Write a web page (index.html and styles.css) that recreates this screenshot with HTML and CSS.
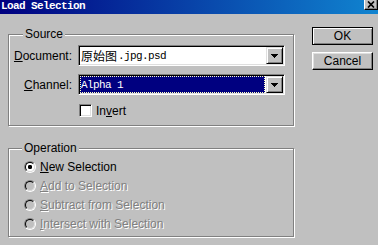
FILE: index.html
```html
<!DOCTYPE html>
<html lang="en">
<head>
    <meta charset="UTF-8">
    <title>Load Selection</title>
    <link rel="stylesheet" href="styles.css">
</head>
<body>
    <div class="titlebar">
        <span class="title">Load Selection</span>
        <span class="close-btn">
            <svg width="8" height="7" viewBox="0 0 8 7"><path d="M1 0.5 L7 6.5 M7 0.5 L1 6.5" stroke="#000" stroke-width="1.7"/></svg>
        </span>
    </div>

    <div class="dialog">
        <div class="groups">
            <fieldset class="group source">
                <legend>Source</legend>
                <div class="source-grid">
                    <label class="field-label"><u>D</u>ocument:</label>
                    <div class="combo">
                        <span class="combo-value"><span class="cjk">原始图</span>.jpg.psd</span>
                        <span class="drop-btn">
                            <svg width="7" height="4" viewBox="0 0 7 4" shape-rendering="crispEdges"><path d="M0 0h7v1H0z M1 1h5v1H1z M2 2h3v1H2z M3 3h1v1H3z" fill="#000"/></svg>
                        </span>
                    </div>

                    <label class="field-label"><u>C</u>hannel:</label>
                    <div class="combo">
                        <span class="combo-value selected">Alpha 1</span>
                        <span class="drop-btn">
                            <svg width="7" height="4" viewBox="0 0 7 4" shape-rendering="crispEdges"><path d="M0 0h7v1H0z M1 1h5v1H1z M2 2h3v1H2z M3 3h1v1H3z" fill="#000"/></svg>
                        </span>
                    </div>

                    <div class="check-row">
                        <span class="checkbox"></span>
                        <span>In<u>v</u>ert</span>
                    </div>
                </div>
            </fieldset>

            <fieldset class="group operation">
                <legend>Operation</legend>
                <div class="radio-row">
                    <span class="radio checked"></span>
                    <span><u>N</u>ew Selection</span>
                </div>
                <div class="radio-row disabled">
                    <span class="radio"></span>
                    <span><u>A</u>dd to Selection</span>
                </div>
                <div class="radio-row disabled">
                    <span class="radio"></span>
                    <span><u>S</u>ubtract from Selection</span>
                </div>
                <div class="radio-row disabled">
                    <span class="radio"></span>
                    <span><u>I</u>ntersect with Selection</span>
                </div>
            </fieldset>
        </div>

        <div class="buttons">
            <button type="button" class="btn default">OK</button>
            <button type="button" class="btn">Cancel</button>
        </div>
    </div>
</body>
</html>
```

FILE: styles.css
```css
body {
    margin: 0;
    width: 378px;
    height: 245px;
    overflow: hidden;
    background-color: #c0c0c0;
    font-family: "Liberation Sans", Arial, sans-serif;
    font-size: 12px;
    color: #000;
}
.titlebar {
    height: 14px;
    display: flex;
    justify-content: space-between;
    align-items: flex-start;
    background: linear-gradient(90deg, #000080, #1084d0);
}
.title {
    color: #fff;
    font-family: "Liberation Mono", monospace;
    font-weight: bold;
    font-size: 11px;
    letter-spacing: -0.6px;
    line-height: 13px;
    padding-left: 1px;
}
.close-btn {
    width: 14px;
    height: 10px;
    box-sizing: border-box;
    display: flex;
    align-items: center;
    justify-content: center;
    background-color: #c0c0c0;
    border-left: 1px solid #fff;
    border-right: 1px solid #000;
    border-bottom: 1px solid #000;
    box-shadow: inset -1px -1px 0 #808080;
}
.dialog {
    display: flex;
    padding: 13px 0 0 8px;
}
.groups {
    width: 286px;
    display: flex;
    flex-direction: column;
    gap: 15px;
}
.group {
    margin: 0;
    min-width: 0;
    box-sizing: border-box;
    width: 286px;
    border: 1px solid #808080;
    box-shadow: 1px 1px 0 #fff, inset 1px 1px 0 #fff;
}
.group legend {
    margin-left: 14px;
    padding: 0 2px;
    line-height: 14px;
    background-color: #c0c0c0;
}
.source {
    padding: 4px 0 9px 0;
}
.operation {
    padding: 2px 0 3px 15px;
}
.operation legend {
    margin-left: -2px;
}
.source-grid {
    display: grid;
    grid-template-columns: 63px 207px;
    grid-template-rows: 21px 21px 13px;
    column-gap: 6px;
    row-gap: 8px;
}
.field-label {
    text-align: right;
    align-self: center;
}
.combo {
    display: flex;
    box-sizing: border-box;
    height: 21px;
    background-color: #fff;
    border: 1px solid;
    border-color: #808080 #fff #fff #808080;
    box-shadow: inset 1px 1px 0 #000, inset -1px -1px 0 #dfdfdf;
    padding: 1px;
}
.combo-value {
    flex: 1;
    display: flex;
    align-items: center;
    padding-left: 1px;
    font-family: "Liberation Mono", monospace;
    font-size: 11px;
    letter-spacing: -0.6px;
}
.cjk {
    font-family: "Noto Sans CJK SC", sans-serif;
    font-size: 12px;
    letter-spacing: 0;
    margin-right: 1px;
}
.combo-value.selected {
    background-color: #000080;
    color: #fff;
    border: 1px dotted #ffffc0;
    padding-left: 0;
    margin-right: 1px;
}
.drop-btn {
    width: 17px;
    flex: none;
    box-sizing: border-box;
    display: flex;
    align-items: center;
    justify-content: center;
    background-color: #c0c0c0;
    border: 1px solid;
    border-color: #dfdfdf #000 #000 #dfdfdf;
    box-shadow: inset 1px 1px 0 #fff, inset -1px -1px 0 #808080;
}
.check-row {
    grid-column: 2;
    height: 13px;
    margin-top: 1px;
    margin-left: 1px;
    display: flex;
    align-items: center;
    gap: 4px;
}
.checkbox {
    width: 13px;
    height: 13px;
    box-sizing: border-box;
    background-color: #fff;
    border: 1px solid;
    border-color: #808080 #fff #fff #808080;
    box-shadow: inset 1px 1px 0 #000, inset -1px -1px 0 #dfdfdf;
}
.radio-row {
    height: 19px;
    display: flex;
    align-items: center;
    gap: 4px;
}
.radio {
    width: 12px;
    height: 12px;
    box-sizing: border-box;
    border-radius: 50%;
    border: 1px solid;
    border-color: #808080 #fff #fff #808080;
}
.radio::before {
    content: "";
    display: block;
    width: 10px;
    height: 10px;
    box-sizing: border-box;
    border-radius: 50%;
    border: 1px solid;
    border-color: #000 #dfdfdf #dfdfdf #000;
    background-color: #fff;
}
.radio.checked::before {
    background: radial-gradient(circle, #000 0 2px, #fff 2.3px);
}
.disabled {
    color: #808080;
    text-shadow: 1px 1px 0 #fff;
}
.disabled .radio::before {
    background-color: #c0c0c0;
}
.buttons {
    margin-left: 18px;
    display: flex;
    flex-direction: column;
    gap: 7px;
}
.btn {
    width: 61px;
    height: 18px;
    padding: 0;
    font-family: "Liberation Sans", Arial, sans-serif;
    font-size: 12px;
    color: #000;
    background-color: #c0c0c0;
    border: 1px solid;
    border-color: #fff #000 #000 #fff;
    box-shadow: inset -1px -1px 0 #808080, inset 1px 1px 0 #dfdfdf;
}
.btn.default {
    border-color: #000;
    box-shadow: inset 1px 1px 0 #fff, inset -1px -1px 0 #808080;
}
```
